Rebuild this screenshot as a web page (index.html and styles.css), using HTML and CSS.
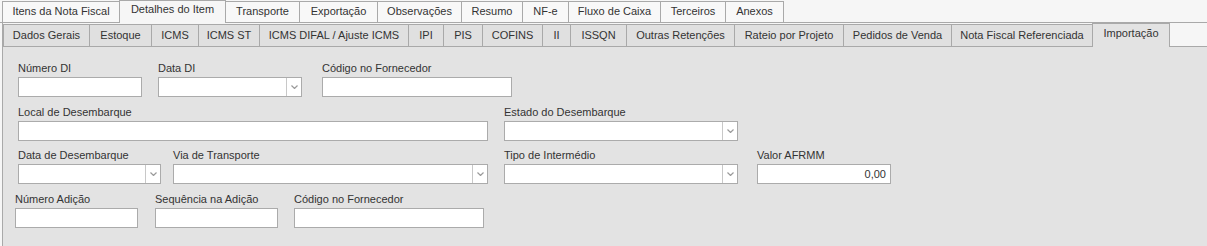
FILE: index.html
```html
<!DOCTYPE html>
<html lang="pt-BR">

<head>
  <meta charset="UTF-8" />
  <title>Detalhes do Item - Importação</title>
  <link rel="stylesheet" href="styles.css">
</head>

<body>
  <div class="tabs-top">
    <div class="tab">Itens da Nota Fiscal</div>
    <div class="tab active">Detalhes do Item</div>
    <div class="tab">Transporte</div>
    <div class="tab">Exportação</div>
    <div class="tab">Observações</div>
    <div class="tab">Resumo</div>
    <div class="tab">NF-e</div>
    <div class="tab">Fluxo de Caixa</div>
    <div class="tab">Terceiros</div>
    <div class="tab">Anexos</div>
  </div>

  <div class="page">
    <div class="tabs-sub">
      <div class="tab">Dados Gerais</div>
      <div class="tab">Estoque</div>
      <div class="tab">ICMS</div>
      <div class="tab">ICMS ST</div>
      <div class="tab">ICMS DIFAL / Ajuste ICMS</div>
      <div class="tab">IPI</div>
      <div class="tab">PIS</div>
      <div class="tab">COFINS</div>
      <div class="tab">II</div>
      <div class="tab">ISSQN</div>
      <div class="tab">Outras Retenções</div>
      <div class="tab">Rateio por Projeto</div>
      <div class="tab">Pedidos de Venda</div>
      <div class="tab">Nota Fiscal Referenciada</div>
      <div class="tab active">Importação</div>
    </div>

    <div class="panel">
      <div class="row row-1">
        <div class="field f-numero-di">
          <label>Número DI</label>
          <div class="edit"></div>
        </div>
        <div class="field f-data-di">
          <label>Data DI</label>
          <div class="edit combo"><span class="combo-btn"><svg width="7" height="4" viewBox="0 0 7 4"><path d="M0.5 0.5 L3.5 3.5 L6.5 0.5" fill="none" stroke="#9a9a9a" stroke-width="1.2" /></svg></span></div>
        </div>
        <div class="field f-codigo">
          <label>Código no Fornecedor</label>
          <div class="edit"></div>
        </div>
      </div>

      <div class="row row-2">
        <div class="field f-local">
          <label>Local de Desembarque</label>
          <div class="edit"></div>
        </div>
        <div class="field f-estado">
          <label>Estado do Desembarque</label>
          <div class="edit combo"><span class="combo-btn"><svg width="7" height="4" viewBox="0 0 7 4"><path d="M0.5 0.5 L3.5 3.5 L6.5 0.5" fill="none" stroke="#9a9a9a" stroke-width="1.2" /></svg></span></div>
        </div>
      </div>

      <div class="row row-3">
        <div class="field f-data-desemb">
          <label>Data de Desembarque</label>
          <div class="edit combo"><span class="combo-btn"><svg width="7" height="4" viewBox="0 0 7 4"><path d="M0.5 0.5 L3.5 3.5 L6.5 0.5" fill="none" stroke="#9a9a9a" stroke-width="1.2" /></svg></span></div>
        </div>
        <div class="field f-via">
          <label>Via de Transporte</label>
          <div class="edit combo"><span class="combo-btn"><svg width="7" height="4" viewBox="0 0 7 4"><path d="M0.5 0.5 L3.5 3.5 L6.5 0.5" fill="none" stroke="#9a9a9a" stroke-width="1.2" /></svg></span></div>
        </div>
        <div class="field f-tipo">
          <label>Tipo de Intermédio</label>
          <div class="edit combo"><span class="combo-btn"><svg width="7" height="4" viewBox="0 0 7 4"><path d="M0.5 0.5 L3.5 3.5 L6.5 0.5" fill="none" stroke="#9a9a9a" stroke-width="1.2" /></svg></span></div>
        </div>
        <div class="field f-afrmm">
          <label>Valor AFRMM</label>
          <div class="edit number">0,00</div>
        </div>
      </div>

      <div class="row row-4">
        <div class="field f-adicao">
          <label>Número Adição</label>
          <div class="edit"></div>
        </div>
        <div class="field f-sequencia">
          <label>Sequência na Adição</label>
          <div class="edit"></div>
        </div>
        <div class="field f-codigo">
          <label>Código no Fornecedor</label>
          <div class="edit"></div>
        </div>
      </div>
    </div>
  </div>
</body>

</html>
```

FILE: styles.css
```css
body {
  margin: 0;
  background-color: #f6f6f6;
  font-family: "Liberation Sans", Arial, sans-serif;
  font-size: 11px;
  color: #333;
  height: 246px;
  overflow: hidden;
}

/* ---------- tabs ---------- */

.tabs-top,
.tabs-sub {
  display: flex;
  align-items: flex-end;
  border-bottom: 1px solid #a9a9a9;
  box-sizing: border-box;
}

.tabs-top {
  height: 23px;
  padding-left: 2px;
}

.tabs-sub {
  height: 24px;
  background-color: #f6f6f6;
}

.tab {
  box-sizing: border-box;
  border: 1px solid #a9a9a9;
  border-bottom: none;
  border-right: none;
  text-align: center;
  white-space: nowrap;
  position: relative;
}

.tab:last-child {
  border-right: 1px solid #a9a9a9;
}

.tabs-top .tab {
  height: 21px;
  line-height: 19px;
  background-color: #f8f8f8;
}

.tabs-top .tab.active {
  height: 23px;
  line-height: 17px;
  margin-bottom: -1px;
  background-color: #f6f6f6;
  border-right: 1px solid #a9a9a9;
  margin-right: -1px;
  z-index: 1;
}

.tabs-sub .tab {
  height: 22px;
  line-height: 21px;
  background-color: #e0e0e0;
}

.tabs-sub .tab.active {
  height: 24px;
  line-height: 19px;
  margin-bottom: -1px;
  background-color: #e3e3e3;
  z-index: 1;
}

.tabs-top .tab:nth-child(1) { width: 117px; }
.tabs-top .tab:nth-child(2) { width: 107px; }
.tabs-top .tab:nth-child(3) { width: 74px; }
.tabs-top .tab:nth-child(4) { width: 78px; }
.tabs-top .tab:nth-child(5) { width: 84px; }
.tabs-top .tab:nth-child(6) { width: 61px; }
.tabs-top .tab:nth-child(7) { width: 46px; }
.tabs-top .tab:nth-child(8) { width: 92px; }
.tabs-top .tab:nth-child(9) { width: 65px; }
.tabs-top .tab:nth-child(10) { width: 59px; }

.tabs-sub .tab:nth-child(1) { width: 86px; }
.tabs-sub .tab:nth-child(2) { width: 62px; }
.tabs-sub .tab:nth-child(3) { width: 47px; }
.tabs-sub .tab:nth-child(4) { width: 61px; }
.tabs-sub .tab:nth-child(5) { width: 149px; }
.tabs-sub .tab:nth-child(6) { width: 35px; }
.tabs-sub .tab:nth-child(7) { width: 39px; }
.tabs-sub .tab:nth-child(8) { width: 60px; }
.tabs-sub .tab:nth-child(9) { width: 28px; }
.tabs-sub .tab:nth-child(10) { width: 56px; }
.tabs-sub .tab:nth-child(11) { width: 108px; }
.tabs-sub .tab:nth-child(12) { width: 109px; }
.tabs-sub .tab:nth-child(13) { width: 108px; }
.tabs-sub .tab:nth-child(14) { width: 141px; }
.tabs-sub .tab:nth-child(15) { width: 78px; }

/* ---------- page / panel ---------- */

.page {
  margin-left: 2px;
  border-left: 1px solid #a9a9a9;
}

.panel {
  background-color: #e3e3e3;
  height: 200px;
  padding: 14px 0 0 15px;
  box-sizing: border-box;
}

.row {
  display: flex;
}

.row-2 {
  margin-top: 8px;
}

.row-3 {
  margin-top: 7px;
}

.row-4 {
  margin-top: 8px;
  margin-left: -3px;
}

.field {
  display: flex;
  flex-direction: column;
}

.field label {
  height: 14px;
  line-height: 14px;
  margin-bottom: 2px;
  white-space: nowrap;
}

.edit {
  height: 20px;
  box-sizing: border-box;
  background-color: #fff;
  border: 1px solid #ababab;
  position: relative;
}

.edit.number {
  text-align: right;
  line-height: 18px;
  padding-right: 4px;
}

.combo-btn {
  position: absolute;
  top: 0;
  right: 0;
  bottom: 0;
  width: 14px;
  border-left: 1px solid #c8c8c8;
  display: flex;
  align-items: center;
  justify-content: center;
}

/* field widths and spacing */

.f-numero-di { width: 124px; margin-right: 16px; }
.f-data-di { width: 144px; margin-right: 20px; }
.f-codigo { width: 190px; }

.f-local { width: 470px; margin-right: 16px; }
.f-estado { width: 234px; }

.f-data-desemb { width: 143px; margin-right: 12px; }
.f-via { width: 315px; margin-right: 16px; }
.f-tipo { width: 234px; margin-right: 19px; }
.f-afrmm { width: 134px; }

.f-adicao { width: 123px; margin-right: 17px; }
.f-sequencia { width: 123px; margin-right: 16px; }
```
